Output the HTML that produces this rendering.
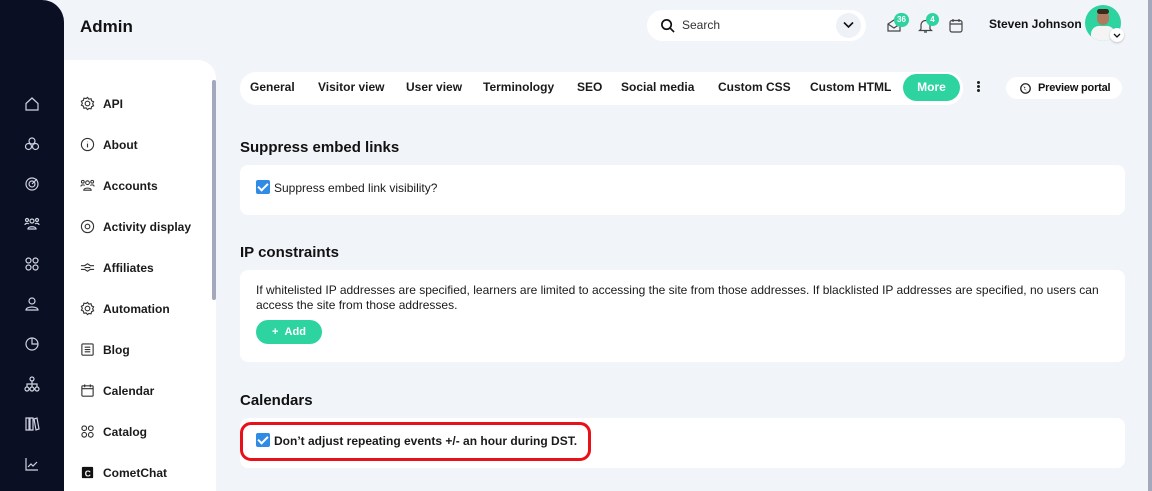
<!DOCTYPE html>
<html><head><style>
*{box-sizing:border-box;margin:0;padding:0}
html,body{width:1152px;height:491px;overflow:hidden}
body{background:#f1f4f8;font-family:"Liberation Sans",sans-serif;color:#111;position:relative}
.abs{position:absolute}
#side{left:0;top:0;width:64px;height:491px;background:#0b0f24;border-top-right-radius:22px}
#side svg{position:absolute;left:24px}
#sub{left:64px;top:60px;width:152px;height:431px;background:#fff;border-top-right-radius:18px}
.mi{position:absolute;left:16px;font-size:12px;font-weight:bold;color:#1a1a1a;display:flex;align-items:center;gap:8px}
.mi svg{width:15px;height:15px}
.tab{position:absolute;top:80px;font-size:12px;font-weight:bold;color:#1a1a1a}
h2{position:absolute;left:240px;font-size:15px;font-weight:bold;color:#111}
.card{position:absolute;left:240px;width:885px;background:#fff;border-radius:8px}
.cb{position:absolute;width:14px;height:14px;background:#2f8be6;border-radius:2px}
.cb:after{content:"";position:absolute;left:4px;top:1px;width:4px;height:8px;border:solid #fff;border-width:0 2px 2px 0;transform:rotate(45deg)}
.t{position:absolute;font-size:12px;color:#1a1a1a}
</style></head><body>
<div id="side" class="abs">
<svg style="top:96px" width="16" height="16" viewBox="0 0 16 16" fill="none" stroke="#cfd3e0" stroke-width="1.2"><path d="M2 7.5 8 2l6 5.5V14H2z"/></svg>
<svg style="top:136px" width="16" height="16" viewBox="0 0 16 16" fill="none" stroke="#cfd3e0" stroke-width="1.2"><circle cx="8" cy="5" r="3"/><circle cx="4.5" cy="10.5" r="3"/><circle cx="11.5" cy="10.5" r="3"/></svg>
<svg style="top:176px" width="16" height="16" viewBox="0 0 16 16" fill="none" stroke="#cfd3e0" stroke-width="1.2"><circle cx="8" cy="8" r="6"/><circle cx="8" cy="8" r="3"/><path d="M8 8l5-5"/></svg>
<svg style="top:216px" width="16" height="16" viewBox="0 0 16 16" fill="none" stroke="#cfd3e0" stroke-width="1.2"><circle cx="8" cy="5" r="2"/><circle cx="3" cy="4" r="1.5"/><circle cx="13" cy="4" r="1.5"/><path d="M4 13c0-3 8-3 8 0zM1 9c0-2 3-2 4-1M15 9c0-2-3-2-4-1"/></svg>
<svg style="top:256px" width="16" height="16" viewBox="0 0 16 16" fill="none" stroke="#cfd3e0" stroke-width="1.2"><circle cx="4.5" cy="4.5" r="2.5"/><circle cx="11.5" cy="4.5" r="2.5"/><circle cx="4.5" cy="11.5" r="2.5"/><circle cx="11.5" cy="11.5" r="2.5"/></svg>
<svg style="top:296px" width="16" height="16" viewBox="0 0 16 16" fill="none" stroke="#cfd3e0" stroke-width="1.2"><circle cx="8" cy="5" r="3"/><path d="M2 14c0-4 12-4 12 0z"/></svg>
<svg style="top:336px" width="16" height="16" viewBox="0 0 16 16" fill="none" stroke="#cfd3e0" stroke-width="1.2"><circle cx="8" cy="8" r="6"/><path d="M8 2v6h6"/></svg>
<svg style="top:376px" width="16" height="16" viewBox="0 0 16 16" fill="none" stroke="#cfd3e0" stroke-width="1.2"><circle cx="8" cy="3" r="2"/><circle cx="3" cy="13" r="2"/><circle cx="8" cy="13" r="2"/><circle cx="13" cy="13" r="2"/><path d="M8 5v6M3 11V8h10v3"/></svg>
<svg style="top:416px" width="16" height="16" viewBox="0 0 16 16" fill="none" stroke="#cfd3e0" stroke-width="1.2"><path d="M2 2h3v12H2zM6 2h3v12H6zM10 3l3-1 2 11-3 1z"/></svg>
<svg style="top:456px" width="16" height="16" viewBox="0 0 16 16" fill="none" stroke="#cfd3e0" stroke-width="1.2"><path d="M2 2v12h12M4 11l3-3 2 2 4-4"/></svg>
</div>
<div class="abs" style="left:80px;top:17px;font-size:17px;font-weight:bold">Admin</div>
<div id="sub" class="abs">
<div class="abs" style="left:148px;top:20px;width:4px;height:220px;background:#a4a8bd;border-radius:2px"></div>
<div class="mi" style="top:36px"><svg viewBox="0 0 16 16" fill="none" stroke="#333" stroke-width="1.2"><circle cx="8" cy="8" r="2.5"/><path d="M8 1.5l1.5 1.8 2.3-.4.6 2.3 2.1 1-1 2.1 1 2.1-2.1 1-.6 2.3-2.3-.4L8 14.5l-1.5-1.8-2.3.4-.6-2.3-2.1-1 1-2.1-1-2.1 2.1-1 .6-2.3 2.3.4z"/></svg>API</div>
<div class="mi" style="top:77px"><svg viewBox="0 0 16 16" fill="none" stroke="#333" stroke-width="1.2"><circle cx="8" cy="8" r="6.5"/><path d="M8 7v4M8 5v.5"/></svg>About</div>
<div class="mi" style="top:118px"><svg viewBox="0 0 16 16" fill="none" stroke="#333" stroke-width="1.1"><circle cx="8" cy="5" r="2"/><circle cx="3" cy="4" r="1.5"/><circle cx="13" cy="4" r="1.5"/><path d="M4 13c0-3 8-3 8 0zM1 9c0-2 3-2 4-1M15 9c0-2-3-2-4-1"/></svg>Accounts</div>
<div class="mi" style="top:159px"><svg viewBox="0 0 16 16" fill="none" stroke="#333" stroke-width="1.2"><circle cx="8" cy="8" r="6.5"/><circle cx="8" cy="8" r="2.5"/></svg>Activity display</div>
<div class="mi" style="top:200px"><svg viewBox="0 0 16 16" fill="none" stroke="#333" stroke-width="1.2"><path d="M1 6h4l3-2 3 2h4M1 10h4l3 2 3-2h4M5 8h6"/></svg>Affiliates</div>
<div class="mi" style="top:241px"><svg viewBox="0 0 16 16" fill="none" stroke="#333" stroke-width="1.2"><circle cx="8" cy="8" r="2.5"/><path d="M8 1.5l1.5 1.8 2.3-.4.6 2.3 2.1 1-1 2.1 1 2.1-2.1 1-.6 2.3-2.3-.4L8 14.5l-1.5-1.8-2.3.4-.6-2.3-2.1-1 1-2.1-1-2.1 2.1-1 .6-2.3 2.3.4z"/></svg>Automation</div>
<div class="mi" style="top:282px"><svg viewBox="0 0 16 16" fill="none" stroke="#333" stroke-width="1.2"><rect x="2" y="2" width="12" height="12" rx="1"/><path d="M5 5.5h6M5 8h6M5 10.5h6"/></svg>Blog</div>
<div class="mi" style="top:323px"><svg viewBox="0 0 16 16" fill="none" stroke="#333" stroke-width="1.2"><rect x="2" y="3" width="12" height="11" rx="1"/><path d="M2 6h12M5 1.5v3M11 1.5v3"/></svg>Calendar</div>
<div class="mi" style="top:364px"><svg viewBox="0 0 16 16" fill="none" stroke="#333" stroke-width="1.2"><circle cx="4.5" cy="4.5" r="2.5"/><circle cx="11.5" cy="4.5" r="2.5"/><circle cx="4.5" cy="11.5" r="2.5"/><circle cx="11.5" cy="11.5" r="2.5"/></svg>Catalog</div>
<div class="mi" style="top:405px"><svg viewBox="0 0 16 16"><rect x="2" y="2" width="12" height="12" rx="1" fill="#111"/><text x="5" y="12" font-size="9" fill="#fff" font-weight="bold" font-family="Liberation Sans">C</text></svg>CometChat</div>
</div>
<div class="abs" style="left:647px;top:10px;width:219px;height:31px;background:#fff;border-radius:16px"></div>
<svg class="abs" style="left:660px;top:18px" width="15" height="15" viewBox="0 0 16 16" fill="none" stroke="#111" stroke-width="1.8"><circle cx="7" cy="7" r="5"/><path d="M11 11l4 4"/></svg>
<div class="abs" style="left:682px;top:18px;font-size:12px;color:#333">Search</div>
<div class="abs" style="left:836px;top:13px;width:25px;height:25px;border-radius:50%;background:#eef1f6"></div>
<svg class="abs" style="left:843px;top:21px" width="11" height="8" viewBox="0 0 11 8" fill="none" stroke="#111" stroke-width="1.6"><path d="M1 1.5l4.5 4.5 4.5-4.5"/></svg>
<svg class="abs" style="left:886px;top:17px" width="16" height="16" viewBox="0 0 16 16" fill="none" stroke="#444" stroke-width="1.2"><path d="M2 7l6-4 6 4v7H2zM2 7l6 4 6-4"/></svg>
<div class="abs" style="left:894px;top:13px;width:15px;height:14px;border-radius:7px;background:#2dd4a0;color:#fff;font-size:8px;font-weight:bold;text-align:center;line-height:14px">36</div>
<svg class="abs" style="left:918px;top:18px" width="15" height="16" viewBox="0 0 15 16" fill="none" stroke="#444" stroke-width="1.2"><path d="M3 11V7a4.5 4.5 0 019 0v4l1.5 1.5h-12zM6 14h3"/></svg>
<div class="abs" style="left:926px;top:13px;width:13px;height:13px;border-radius:7px;background:#2dd4a0;color:#fff;font-size:8px;font-weight:bold;text-align:center;line-height:13px">4</div>
<svg class="abs" style="left:949px;top:18px" width="14" height="15" viewBox="0 0 14 15" fill="none" stroke="#444" stroke-width="1.2"><rect x="1" y="2.5" width="12" height="11.5" rx="2"/><path d="M1 6h12M4 1v3M10 1v3"/></svg>
<div class="abs" style="left:989px;top:17px;font-size:12px;font-weight:bold">Steven Johnson</div>
<div class="abs" style="left:1085px;top:5px;width:36px;height:36px;border-radius:50%;background:#2dd4a0;overflow:hidden">
<div class="abs" style="left:12px;top:6px;width:12px;height:14px;border-radius:6px;background:#b07a5e"></div>
<div class="abs" style="left:12px;top:4px;width:12px;height:5px;border-radius:4px;background:#3a2a20"></div>
<div class="abs" style="left:6px;top:21px;width:24px;height:20px;border-radius:8px;background:#f4f4f4"></div>
</div>
<div class="abs" style="left:1110px;top:28px;width:14px;height:14px;border-radius:50%;background:#fff;box-shadow:0 1px 2px rgba(0,0,0,.2)"></div>
<svg class="abs" style="left:1113px;top:33px" width="8" height="5" viewBox="0 0 8 5" fill="none" stroke="#111" stroke-width="1.3"><path d="M1 1l3 3 3-3"/></svg>
<div class="abs" style="left:240px;top:72px;width:723px;height:33px;background:#fff;border-radius:16px"></div>
<div class="tab" style="left:250px">General</div>
<div class="tab" style="left:318px">Visitor view</div>
<div class="tab" style="left:406px">User view</div>
<div class="tab" style="left:483px">Terminology</div>
<div class="tab" style="left:577px">SEO</div>
<div class="tab" style="left:621px">Social media</div>
<div class="tab" style="left:718px">Custom CSS</div>
<div class="tab" style="left:810px">Custom HTML</div>
<div class="abs" style="left:903px;top:74px;width:57px;height:27px;border-radius:14px;background:#2dd4a0;color:#fff;font-size:12px;font-weight:bold;text-align:center;line-height:27px">More</div>
<div class="abs" style="left:977px;top:81px;width:3px;height:3px;border-radius:50%;background:#222;box-shadow:0 4px 0 #222,0 8px 0 #222"></div>
<div class="abs" style="left:1006px;top:77px;width:116px;height:22px;border-radius:11px;background:#fff"></div>
<svg class="abs" style="left:1020px;top:83px" width="11" height="11" viewBox="0 0 10 10"><circle cx="5" cy="5" r="4.3" fill="none" stroke="#222" stroke-width="1.2"/><path d="M3 3l2 1-1 2 2 1 1 2" fill="#222"/></svg>
<div class="abs" style="left:1038px;top:82px;font-size:11px;font-weight:bold;letter-spacing:-0.2px">Preview portal</div>
<h2 style="top:139px">Suppress embed links</h2>
<div class="card" style="top:165px;height:50px"></div>
<div class="cb" style="left:256px;top:180px"></div>
<div class="t" style="left:274px;top:181px">Suppress embed link visibility?</div>
<h2 style="top:244px">IP constraints</h2>
<div class="card" style="top:270px;height:92px"></div>
<div class="t" style="left:256px;top:283px;width:862px;line-height:15px">If whitelisted IP addresses are specified, learners are limited to accessing the site from those addresses. If blacklisted IP addresses are specified, no users can access the site from those addresses.</div>
<div class="abs" style="left:256px;top:320px;width:66px;height:24px;border-radius:12px;background:#2dd4a0;color:#fff;font-size:11px;font-weight:bold;line-height:24px;padding-left:16px">+&nbsp;&nbsp;Add</div>
<h2 style="top:392px">Calendars</h2>
<div class="card" style="top:418px;height:50px"></div>
<div class="abs" style="left:240px;top:422px;width:351px;height:39px;border:3px solid #e8111a;border-radius:11px"></div>
<div class="cb" style="left:256px;top:433px"></div>
<div class="t" style="left:274px;top:434px;font-weight:bold">Don’t adjust repeating events +/- an hour during DST.</div>
<div class="abs" style="left:1148px;top:0;width:4px;height:491px;background:#a4a8bd"></div>
</body></html>
